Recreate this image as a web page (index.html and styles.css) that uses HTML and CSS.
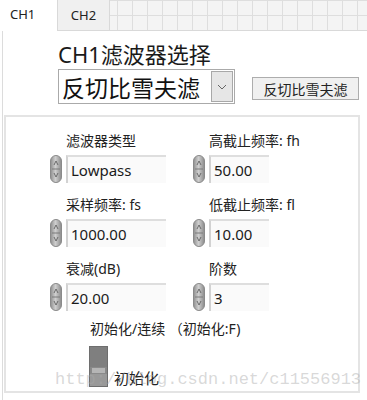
FILE: index.html
```html
<!DOCTYPE html>
<html lang="zh-CN">
<head>
    <meta charset="UTF-8">
    <title>CH1 滤波器</title>
    <link rel="stylesheet" href="styles.css">
</head>
<body>

    <div class="tabbar">
        <div class="tab active">CH1</div>
        <div class="tab">CH2</div>
        <div class="tab-fill"></div>
    </div>

    <div class="page">
        <div class="head">
            <div class="title">CH1滤波器选择</div>
            <div class="head-row">
                <div class="dropdown">
                    <span>反切比雪夫滤</span>
                    <span class="dd-arrow">
                        <svg width="10" height="6" viewBox="0 0 10 6"><path d="M1 1 L5 5 L9 1" fill="none" stroke="#666" stroke-width="1"/></svg>
                    </span>
                </div>
                <button class="btn">反切比雪夫滤</button>
            </div>
        </div>

        <div class="panel">
            <div class="grid">
                <div class="field">
                    <div class="label">滤波器类型</div>
                    <div class="ctrl">
                        <svg class="spin" width="12" height="28" viewBox="0 0 12 28"><use href="#spinner"/></svg>
                        <div class="box wide">Lowpass</div>
                    </div>
                </div>
                <div class="field">
                    <div class="label">高截止频率: fh</div>
                    <div class="ctrl">
                        <svg class="spin" width="12" height="28" viewBox="0 0 12 28"><use href="#spinner"/></svg>
                        <div class="box">50.00</div>
                    </div>
                </div>
                <div class="field">
                    <div class="label">采样频率: fs</div>
                    <div class="ctrl">
                        <svg class="spin" width="12" height="28" viewBox="0 0 12 28"><use href="#spinner"/></svg>
                        <div class="box wide">1000.00</div>
                    </div>
                </div>
                <div class="field">
                    <div class="label">低截止频率: fl</div>
                    <div class="ctrl">
                        <svg class="spin" width="12" height="28" viewBox="0 0 12 28"><use href="#spinner"/></svg>
                        <div class="box">10.00</div>
                    </div>
                </div>
                <div class="field">
                    <div class="label">衰减(dB)</div>
                    <div class="ctrl">
                        <svg class="spin" width="12" height="28" viewBox="0 0 12 28"><use href="#spinner"/></svg>
                        <div class="box wide">20.00</div>
                    </div>
                </div>
                <div class="field">
                    <div class="label">阶数</div>
                    <div class="ctrl">
                        <svg class="spin" width="12" height="28" viewBox="0 0 12 28"><use href="#spinner"/></svg>
                        <div class="box">3</div>
                    </div>
                </div>
            </div>

            <div class="mode-label">初始化/连续 （初始化:F)</div>
            <div class="switch-row">
                <div class="switch">
                    <div class="sw-top"></div>
                    <div class="sw-band"></div>
                    <div class="sw-bottom"></div>
                </div>
                <span class="switch-text">初始化</span>
            </div>
        </div>

        <div class="watermark">http://blog.csdn.net/c11556913</div>
    </div>

    <!-- shared spinner glyph -->
    <svg width="0" height="0" style="position:absolute">
        <defs>
            <linearGradient id="spinGrad" x1="0" y1="0" x2="1" y2="0">
                <stop offset="0" stop-color="#8e8e8e"/>
                <stop offset="0.45" stop-color="#cfcfcf"/>
                <stop offset="1" stop-color="#8a8a8a"/>
            </linearGradient>
            <g id="spinner">
                <rect x="0.5" y="0.5" width="11" height="27" rx="5.5" fill="url(#spinGrad)" stroke="#8a8a8a"/>
                <line x1="2" y1="14" x2="10" y2="14" stroke="#7a7a7a"/>
                <path d="M4 10 L6 6 L8 10" fill="none" stroke="#555" stroke-width="0.8"/>
                <path d="M4 18 L6 22 L8 18" fill="none" stroke="#555" stroke-width="0.8"/>
            </g>
        </defs>
    </svg>

</body>
</html>
```

FILE: styles.css
```css
body {
    margin: 0;
    background: #fff;
    font-family: "Noto Sans", "Noto Sans CJK SC", sans-serif;
    color: #222;
    width: 367px;
    height: 400px;
    overflow: hidden;
}
.tabbar {
    display: flex;
    height: 31px;
}
.tab {
    width: 53px;
    font-size: 13px;
    line-height: 30px;
    text-align: center;
    background: #f0f0f0;
    border: 1px solid #d9d9d9;
    border-top: none;
    box-sizing: border-box;
}
.tab.active {
    width: 57px;
    background: #fff;
    border: none;
    text-align: left;
    padding: 0 0 0 10px;
    line-height: 28px;
}
.tab-fill {
    flex: 1;
    background-color: #f4f4f4;
    background-image:
        linear-gradient(to right, #dedede 1px, transparent 1px),
        linear-gradient(to bottom, #dedede 1px, transparent 1px);
    background-size: 15px 15px;
    background-position: 7px 0;
    border-bottom: 1px solid #d9d9d9;
}
.page {
    position: relative;
    margin-left: 2px;
    border-left: 1px solid #dcdcdc;
    height: 369px;
}
.head {
    padding: 10px 0 0 55px;
}
.title {
    font-size: 22px;
    line-height: 26px;
    color: #1a1a1a;
}
.head-row {
    display: flex;
    align-items: flex-start;
    margin-top: 2px;
}
.dropdown {
    width: 177px;
    height: 35px;
    box-sizing: border-box;
    border: 1px solid #aaa;
    background: #fff;
    display: flex;
    align-items: center;
    justify-content: space-between;
    padding: 0 1px 0 3px;
    font-size: 23px;
    color: #111;
}
.dd-arrow {
    width: 22px;
    height: 31px;
    background: #e6e6e6;
    border: 1px solid #a8a8a8;
    box-sizing: border-box;
    display: flex;
    align-items: center;
    justify-content: center;
}
.btn {
    margin: 8px 0 0 17px;
    width: 107px;
    height: 23px;
    padding: 0;
    font-family: inherit;
    font-size: 14px;
    color: #222;
    background: #f0f0f0;
    border: 1px solid #adadad;
    border-radius: 0;
}
.panel {
    margin: 11px 0 0 1px;
    width: 356px;
    height: 278px;
    box-sizing: border-box;
    border: 2px solid #e4e4e4;
    padding: 14px 0 0 44px;
}
.grid {
    display: grid;
    grid-template-columns: 143px 1fr;
    row-gap: 12px;
}
.label {
    font-size: 14px;
    line-height: 20px;
    padding-left: 16px;
    color: #222;
}
.ctrl {
    display: flex;
    align-items: center;
    margin-top: 4px;
    height: 28px;
}
.spin {
    display: block;
}
.box {
    margin-left: 4px;
    width: 60px;
    height: 28px;
    box-sizing: border-box;
    border-top: 2px solid #dedede;
    border-left: 2px solid #d2d2d2;
    background: #fafafa;
    padding-left: 3px;
    font-size: 15px;
    line-height: 27px;
    color: #1a1a1a;
}
.box.wide {
    width: 100px;
}
.mode-label {
    margin: 8px 0 0 40px;
    font-size: 14px;
    line-height: 20px;
}
.switch-row {
    display: flex;
    align-items: flex-end;
    margin: 7px 0 0 39px;
}
.switch {
    width: 19px;
    height: 41px;
    box-sizing: border-box;
    border: 1px solid #6e6e6e;
    background: #888;
    display: flex;
    flex-direction: column;
}
.sw-top {
    height: 20px;
    background: #7f7f7f;
}
.sw-band {
    height: 5px;
    margin: 0 1px;
    border: 1px solid #8a8a8a;
    background: #b5b5b5;
}
.sw-bottom {
    flex: 1;
    background: #999;
}
.switch-text {
    margin-left: 6px;
    font-size: 15px;
    line-height: 18px;
    margin-bottom: 0;
}
.watermark {
    position: absolute;
    left: 52px;
    top: 339px;
    font-family: "Liberation Mono", "DejaVu Sans Mono", monospace;
    font-size: 17px;
    color: rgba(170, 170, 170, 0.45);
    white-space: nowrap;
}
```
